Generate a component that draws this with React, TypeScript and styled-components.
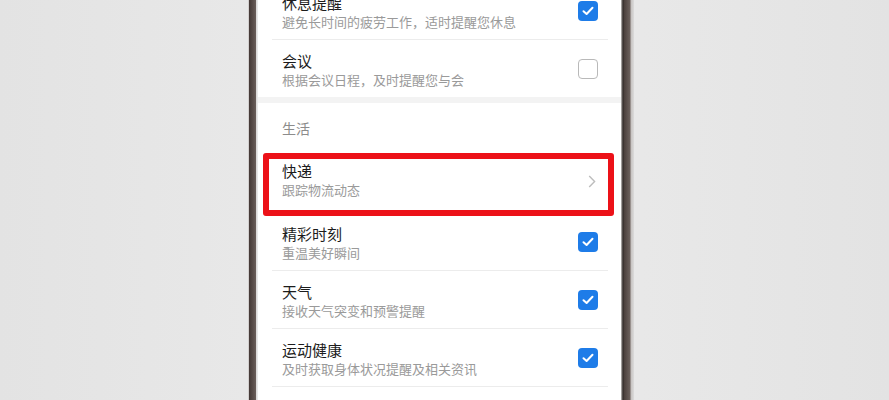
import React from 'react';
import styled, { createGlobalStyle } from 'styled-components';

const GlobalStyle = createGlobalStyle`
  html, body {
    margin: 0;
    padding: 0;
    background: #e6e6e6;
    overflow: hidden;
  }
  body {
    font-family: "Noto Sans CJK SC", "Noto Sans", sans-serif;
  }
`;

const Page = styled.div`
  width: 889px;
  height: 400px;
  display: flex;
  background: linear-gradient(to right, #e3e3e3 0%, #ececec 50%, #e3e3e3 100%);
`;

// phone body; the bezel is painted by the gradient, the screen sits inside
const Phone = styled.div`
  margin-left: 248px;
  width: 386px;
  height: 400px;
  display: flex;
  padding: 0 13px 0 10px;
  box-sizing: border-box;
  background: linear-gradient(
    to right,
    #d2cfce 0px,
    #d2cfce 1px,
    #433835 1px,
    #6a5e5a 8px,
    #d6d4d3 8px,
    #eeeeee 10px,
    #eeeeee 373px,
    #c9c6c5 373px,
    #2e2826 375px,
    #4a3f3c 376px,
    #6b605c 382px,
    #c6c2c0 383px,
    #dcdcdc 386px
  );
`;

const Screen = styled.div`
  flex: 1;
  background: #ffffff;
  height: 400px;
  overflow: hidden;
`;

const List = styled.div`
  margin-top: -18px;
  display: flex;
  flex-direction: column;
`;

const Item = styled.div<{ $last?: boolean; $tall?: number; $lift?: number }>`
  position: relative;
  margin: 0 13px 0 14px;
  padding: ${p => (p.$lift ? `0 10px ${p.$lift}px 10px` : '2px 10px 0 10px')};
  box-sizing: border-box;
  display: flex;
  align-items: center;
  border-bottom: ${p => (p.$last ? 'none' : '1px solid #ececec')};
  height: ${p => (p.$tall ?? 57) + (p.$last ? 0 : 1)}px;
`;

const Texts = styled.div`
  flex: 1;
  display: flex;
  flex-direction: column;
`;

const Title = styled.div`
  font-size: 15px;
  line-height: 20px;
  color: #1c1c1c;
`;

const Sub = styled.div`
  font-size: 13px;
  line-height: 18px;
  color: #9a9a9a;
`;

const Box = styled.div<{ $on?: boolean }>`
  width: 20px;
  height: 20px;
  box-sizing: border-box;
  border-radius: 4px;
  margin-top: -2px;
  display: flex;
  align-items: center;
  justify-content: center;
  background: ${p => (p.$on ? '#1e7ce8' : '#ffffff')};
  border: ${p => (p.$on ? 'none' : '1.5px solid #b9b9b9')};
`;

const Gap = styled.div`
  height: 6px;
  background: #f3f3f3;
`;

const Header = styled.div`
  height: 50px;
  box-sizing: border-box;
  padding: 15px 0 0 24px;
  font-size: 14px;
  line-height: 20px;
  color: #8c8c8c;
`;

const Arrow = styled.svg`
  margin-top: 3px;
  margin-right: 2px;
`;

// red annotation frame drawn over the row
const Highlight = styled.div`
  position: absolute;
  left: -9px;
  right: -6px;
  top: 0px;
  height: 63px;
  box-sizing: border-box;
  border: 6px solid #ec1118;
  border-radius: 3px;
  pointer-events: none;
`;

const Check = () => (
  <svg width="12" height="10" viewBox="0 0 12 10">
    <path d="M1.5 5.2 L4.6 8 L10.5 1.8" fill="none" stroke="#fff" strokeWidth="2" strokeLinecap="round" strokeLinejoin="round" />
  </svg>
);

const Chevron = () => (
  <Arrow width="8" height="13" viewBox="0 0 8 13">
    <path d="M1.2 1 L6.6 6.5 L1.2 12" fill="none" stroke="#bdbdbd" strokeWidth="1.4" />
  </Arrow>
);

type Row = { title: string; sub: string; on?: boolean; last?: boolean };

const top: Row[] = [
  { title: '休息提醒', sub: '避免长时间的疲劳工作，适时提醒您休息', on: true },
  { title: '会议', sub: '根据会议日程，及时提醒您与会', on: false, last: true },
];

const life: Row[] = [
  { title: '精彩时刻', sub: '重温美好瞬间', on: true },
  { title: '天气', sub: '接收天气突变和预警提醒', on: true },
  { title: '运动健康', sub: '及时获取身体状况提醒及相关资讯', on: true },
  { title: '健康使用手机', sub: '合理安排使用时间', on: true },
];

const SwitchRow = ({ row }: { row: Row }) => (
  <Item $last={row.last}>
    <Texts>
      <Title>{row.title}</Title>
      <Sub>{row.sub}</Sub>
    </Texts>
    <Box $on={row.on}>{row.on && <Check />}</Box>
  </Item>
);

export default function App() {
  return (
    <>
      <GlobalStyle />
      <Page>
        <Phone>
          <Screen>
            <List>
              {top.map(r => <SwitchRow key={r.title} row={r} />)}
              <Gap />
              <Header>生活</Header>
              <Item $tall={59} $lift={6}>
                <Texts>
                  <Title>快递</Title>
                  <Sub>跟踪物流动态</Sub>
                </Texts>
                <Chevron />
                <Highlight />
              </Item>
              {life.map(r => <SwitchRow key={r.title} row={r} />)}
            </List>
          </Screen>
        </Phone>
      </Page>
    </>
  );
}
